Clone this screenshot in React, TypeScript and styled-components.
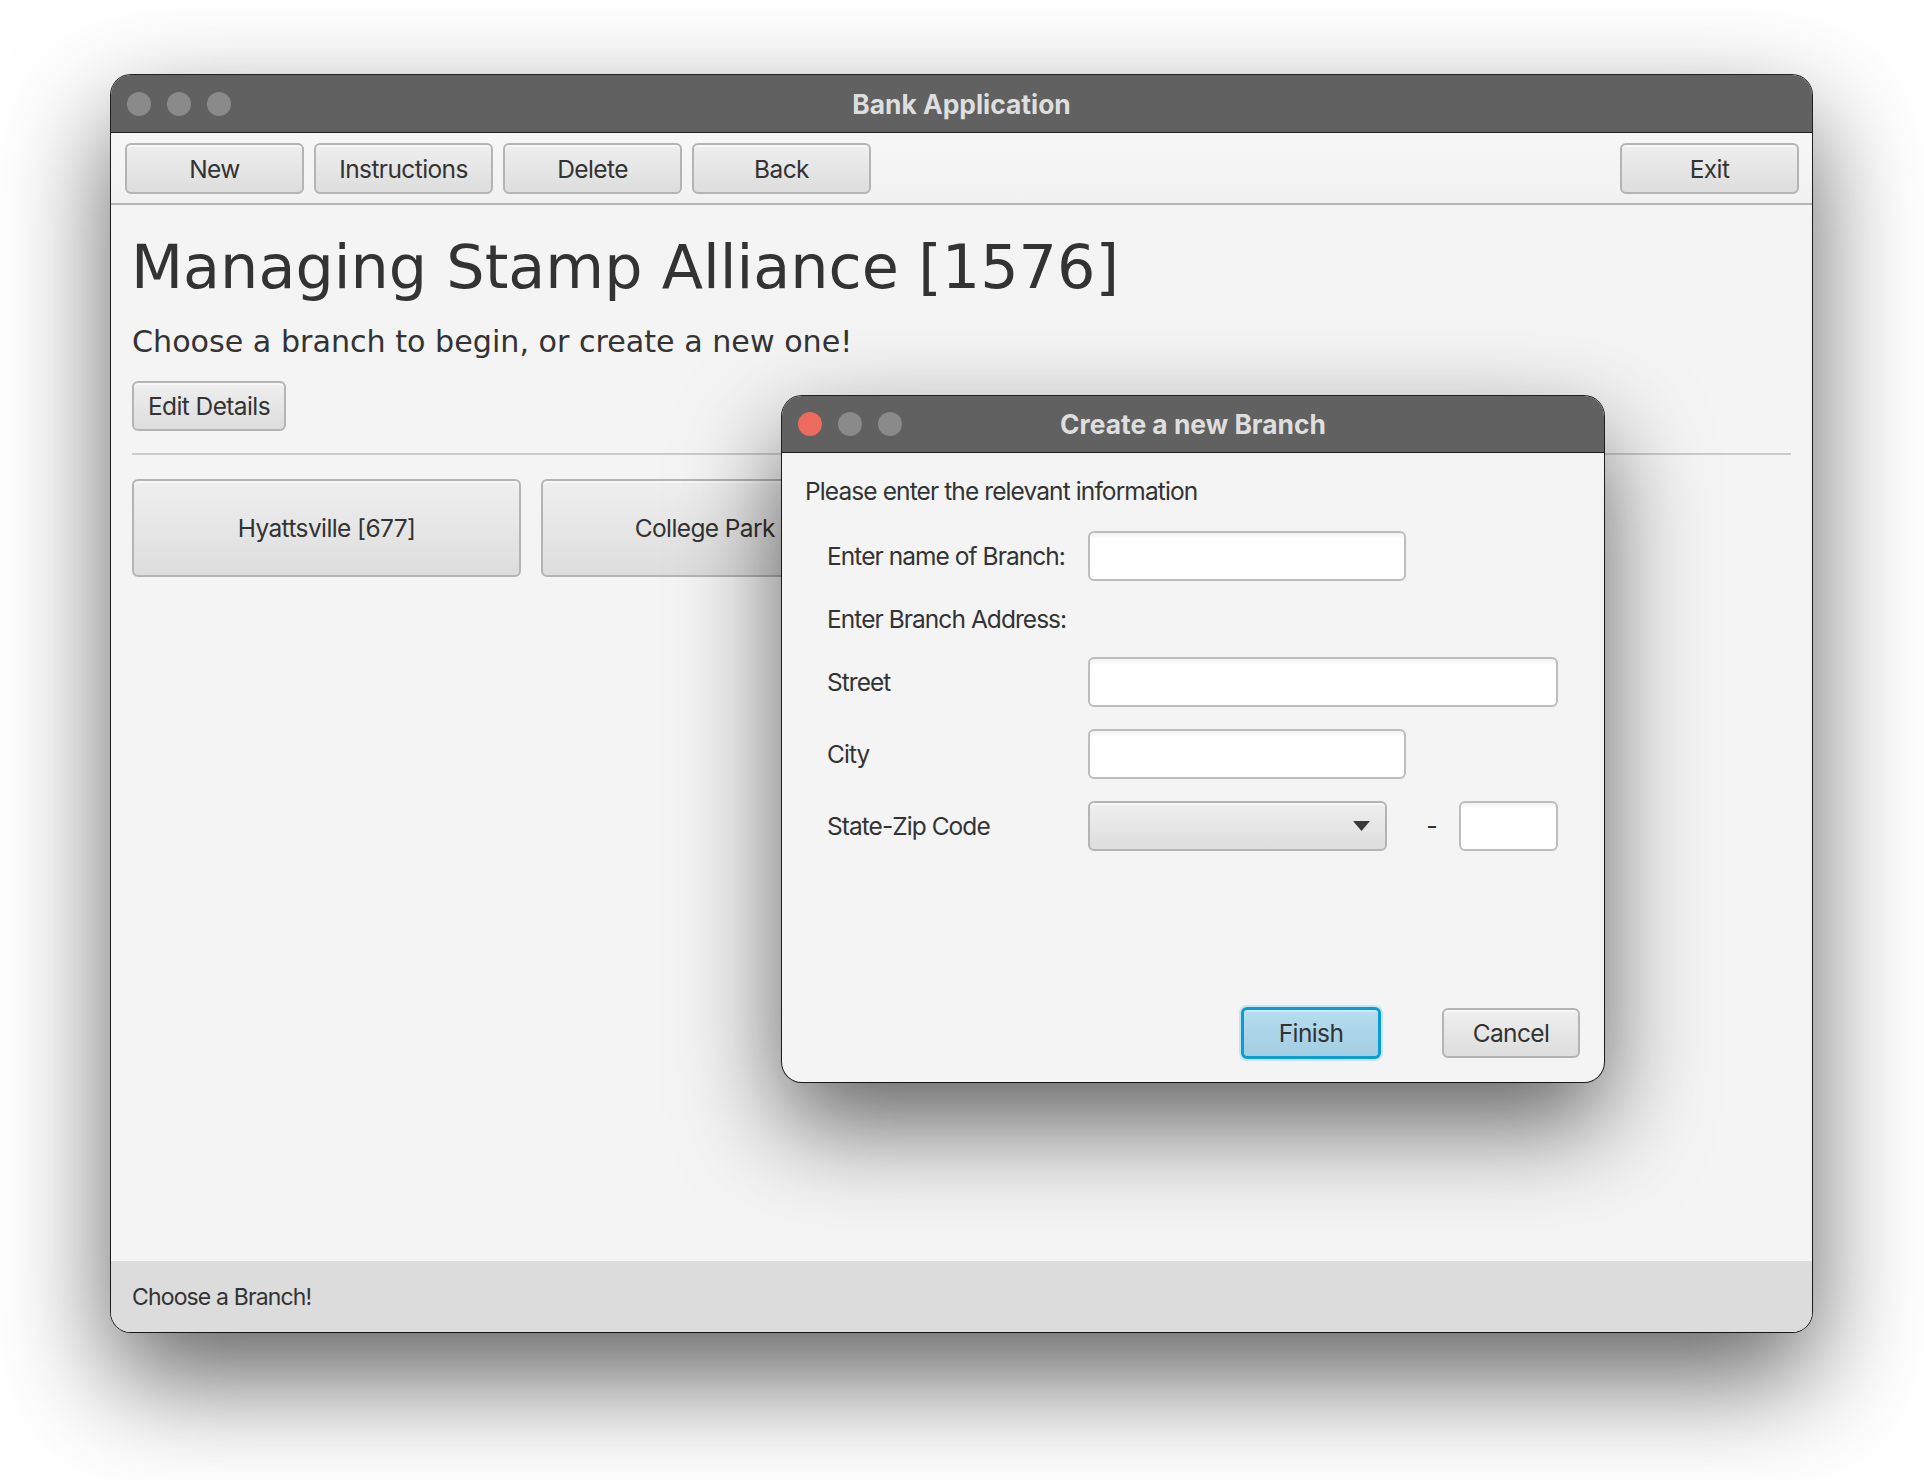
import React from 'react';
import styled, { createGlobalStyle } from 'styled-components';

const GlobalStyle = createGlobalStyle`
  html, body { margin: 0; padding: 0; background: #ffffff; }
  body {
    width: 1924px; height: 1480px; overflow: hidden;
    font-family: Inter, "Noto Sans", sans-serif;
    color: #333333;
  }
  * { box-sizing: border-box; }
`;

const Page = styled.div`
  position: relative;
  width: 1924px;
  height: 1480px;
  padding: 75px 0 0 111px;
  background: #ffffff;
`;

const Window = styled.div`
  width: 1701px;
  height: 1257px;
  display: flex;
  flex-direction: column;
  border-radius: 20px;
  overflow: hidden;
  background: #f4f4f4;
  box-shadow: 0 0 0 1px rgba(0, 0, 0, 0.85), 0 46px 110px rgba(0, 0, 0, 0.62);
`;

const TitleBar = styled.div<{ $h: number }>`
  flex: none;
  height: ${(p) => p.$h}px;
  background: #616161;
  border-bottom: 1px solid #1d1d1d;
  display: grid;
  grid-template-columns: 1fr auto 1fr;
  align-items: center;
  padding: 0 16px;
`;

const Lights = styled.div`
  display: flex;
  gap: 16px;
  justify-self: start;
`;

const Light = styled.span<{ $color: string }>`
  width: 24px;
  height: 24px;
  border-radius: 50%;
  background: ${(p) => p.$color};
`;

const TitleText = styled.div`
  font-family: Inter, "Noto Sans", sans-serif;
  font-weight: 700;
  font-size: 26.4px;
  color: #dedede;
`;

const Toolbar = styled.div`
  flex: none;
  height: 72px;
  display: flex;
  align-items: flex-start;
  gap: 10px;
  padding: 10px 13px 0 14px;
  background: linear-gradient(#f7f7f7, #f1f1f1);
  border-bottom: 2px solid #b6b6b6;
`;

const Spacer = styled.div`
  flex: 1;
`;

const Button = styled.button<{ $w: number; $h: number }>`
  flex: none;
  width: ${(p) => p.$w}px;
  height: ${(p) => p.$h}px;
  padding: 0;
  font-family: Inter, "Noto Sans", sans-serif;
  font-size: 24.5px;
  letter-spacing: -0.6px;
  color: #333333;
  border: 2px solid #b4b4b4;
  border-radius: 6px;
  background: linear-gradient(#efefef, #dddddd);
  box-shadow: inset 0 2px 0 rgba(255, 255, 255, 0.55);
  display: flex;
  align-items: center;
  justify-content: center;
  white-space: nowrap;
  overflow: hidden;
`;

const DefaultButton = styled(Button)`
  border: 3px solid #0a9dd4;
  background: linear-gradient(#b6ddf0, #a3cde2);
  box-shadow: 0 0 0 2px rgba(10, 157, 212, 0.18), inset 0 2px 0 rgba(255, 255, 255, 0.35);
`;

const Content = styled.div`
  flex: 1;
  display: flex;
  flex-direction: column;
  align-items: flex-start;
  padding: 27px 21px 0 21px;
`;

const Heading = styled.h1`
  margin: 0 0 0 -1px;
  font-family: "DejaVu Sans", Verdana, sans-serif;
  font-weight: 400;
  font-size: 60.4px;
  line-height: 70px;
  color: #333333;
`;

const Subtitle = styled.p`
  margin: 22px 0 0 0;
  font-family: "DejaVu Sans", Verdana, sans-serif;
  font-size: 30.15px;
  line-height: 35px;
  color: #333333;
`;

const EditRow = styled.div`
  margin-top: 22px;
`;

const Separator = styled.div`
  align-self: stretch;
  margin-top: 22px;
  height: 2px;
  background: #cbcbcb;
`;

const BranchRow = styled.div`
  margin-top: 24px;
  display: flex;
  gap: 20px;
`;

const StatusBar = styled.div`
  flex: none;
  height: 71px;
  background: #dcdcdc;
  display: flex;
  align-items: center;
  padding-left: 21px;
  font-size: 23px;
  letter-spacing: -0.85px;
  color: #333333;
`;

const Dialog = styled.div`
  position: absolute;
  left: 782px;
  top: 396px;
  width: 822px;
  height: 686px;
  display: flex;
  flex-direction: column;
  border-radius: 20px;
  overflow: hidden;
  background: #f4f4f4;
  box-shadow: 0 0 0 1px rgba(0, 0, 0, 0.85), 0 42px 100px rgba(0, 0, 0, 0.6);
`;

const DialogBody = styled.div`
  flex: 1;
  display: flex;
  flex-direction: column;
  padding: 22px 24px 23px 23px;
`;

const Intro = styled.div`
  font-size: 24.5px;
  line-height: 32px;
  letter-spacing: -0.9px;
  color: #333333;
`;

const FormGrid = styled.div`
  margin-top: 24px;
  padding-left: 22px;
  display: grid;
  grid-template-columns: 261px auto;
  grid-template-rows: 50px 32px 50px 50px 50px;
  row-gap: 22px;
  align-items: center;
  justify-items: start;
`;

const Label = styled.div<{ $span?: boolean }>`
  font-size: 24.5px;
  letter-spacing: -0.95px;
  color: #333333;
  ${(p) => (p.$span ? 'grid-column: 1 / span 2;' : '')}
`;

const Field = styled.div<{ $w: number }>`
  width: ${(p) => p.$w}px;
  height: 50px;
  border: 2px solid #bdbdbd;
  border-radius: 6px;
  background: linear-gradient(#f2f2f2, #ffffff 6px, #ffffff);
`;

const ComboRow = styled.div`
  display: flex;
  align-items: center;
`;

const Combo = styled.div`
  width: 299px;
  height: 50px;
  border: 2px solid #b4b4b4;
  border-radius: 6px;
  background: linear-gradient(#efefef, #dddddd);
  box-shadow: inset 0 2px 0 rgba(255, 255, 255, 0.55);
  display: flex;
  align-items: center;
  justify-content: flex-end;
  padding-right: 15px;
`;

const Dash = styled.span`
  width: 72px;
  padding-left: 18px;
  text-align: center;
  font-size: 25px;
  color: #333333;
`;

const Actions = styled.div`
  margin-top: auto;
  display: flex;
  justify-content: flex-end;
  align-items: center;
  gap: 61px;
`;

const Arrow = () => (
  <svg width="17" height="10" viewBox="0 0 17 10">
    <path d="M0 0 H17 L8.5 10 Z" fill="#3a3a3a" />
  </svg>
);

export default function App() {
  return (
    <Page>
      <GlobalStyle />
      <Window>
        <TitleBar $h={58}>
          <Lights>
            <Light $color="#8a8a8a" />
            <Light $color="#8a8a8a" />
            <Light $color="#8a8a8a" />
          </Lights>
          <TitleText>Bank Application</TitleText>
          <div />
        </TitleBar>
        <Toolbar>
          <Button $w={179} $h={51}>New</Button>
          <Button $w={179} $h={51}>Instructions</Button>
          <Button $w={179} $h={51}>Delete</Button>
          <Button $w={179} $h={51}>Back</Button>
          <Spacer />
          <Button $w={179} $h={51}>Exit</Button>
        </Toolbar>
        <Content>
          <Heading>Managing Stamp Alliance [1576]</Heading>
          <Subtitle>Choose a branch to begin, or create a new one!</Subtitle>
          <EditRow>
            <Button $w={154} $h={50}>Edit Details</Button>
          </EditRow>
          <Separator />
          <BranchRow>
            <Button $w={389} $h={98}>Hyattsville [677]</Button>
            <Button $w={389} $h={98}>College Park [412]</Button>
          </BranchRow>
        </Content>
        <StatusBar>Choose a Branch!</StatusBar>
      </Window>

      <Dialog>
        <TitleBar $h={57}>
          <Lights>
            <Light $color="#ed6a5e" />
            <Light $color="#8a8a8a" />
            <Light $color="#8a8a8a" />
          </Lights>
          <TitleText>Create a new Branch</TitleText>
          <div />
        </TitleBar>
        <DialogBody>
          <Intro>Please enter the relevant information</Intro>
          <FormGrid>
            <Label>Enter name of Branch:</Label>
            <Field $w={318} />
            <Label $span>Enter Branch Address:</Label>
            <Label>Street</Label>
            <Field $w={470} />
            <Label>City</Label>
            <Field $w={318} />
            <Label>State-Zip Code</Label>
            <ComboRow>
              <Combo>
                <Arrow />
              </Combo>
              <Dash>-</Dash>
              <Field $w={99} />
            </ComboRow>
          </FormGrid>
          <Actions>
            <DefaultButton $w={140} $h={52}>Finish</DefaultButton>
            <Button $w={138} $h={50}>Cancel</Button>
          </Actions>
        </DialogBody>
      </Dialog>
    </Page>
  );
}
